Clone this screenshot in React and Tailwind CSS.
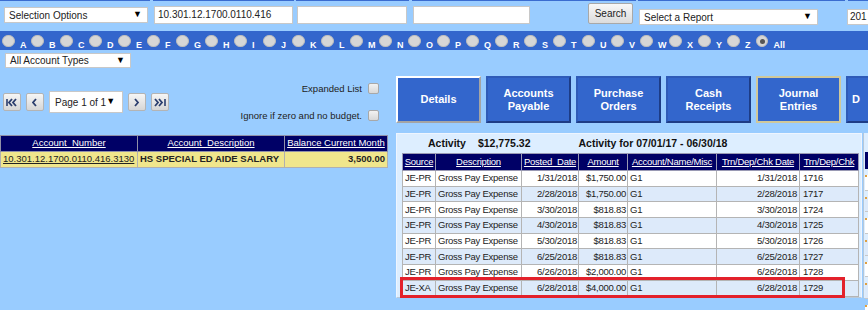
import React from "react";

const letters = "ABCDEFGHIJKLMNOPQRSTUVWXYZ".split("");

const rows = [
  ["JE-PR", "Gross Pay Expense", "1/31/2018", "$1,750.00", "G1", "1/31/2018", "1716"],
  ["JE-PR", "Gross Pay Expense", "2/28/2018", "$1,750.00", "G1", "2/28/2018", "1717"],
  ["JE-PR", "Gross Pay Expense", "3/30/2018", "$818.83", "G1", "3/30/2018", "1724"],
  ["JE-PR", "Gross Pay Expense", "4/30/2018", "$818.83", "G1", "4/30/2018", "1725"],
  ["JE-PR", "Gross Pay Expense", "5/30/2018", "$818.83", "G1", "5/30/2018", "1726"],
  ["JE-PR", "Gross Pay Expense", "6/25/2018", "$818.83", "G1", "6/25/2018", "1727"],
  ["JE-PR", "Gross Pay Expense", "6/26/2018", "$2,000.00", "G1", "6/26/2018", "1728"],
  ["JE-XA", "Gross Pay Expense", "6/28/2018", "$4,000.00", "G1", "6/28/2018", "1729"],
];

const tabs = [
  ["Details"],
  ["Accounts", "Payable"],
  ["Purchase", "Orders"],
  ["Cash", "Receipts"],
  ["Journal", "Entries"],
];

function Select({ label, className }) {
  return (
    <div className={`shrink-0 flex items-center justify-between bg-white border border-[#c8c8c8] pl-[4px] pr-[5px] text-[10px] text-[#222] whitespace-nowrap ${className}`}>
      <span>{label}</span>
      <span className="text-[9px] text-black">▼</span>
    </div>
  );
}

function PagerBtn({ children }) {
  return (
    <div className="flex items-center justify-center w-[18px] h-[18px] border border-[#b4b4b4] rounded-[2px] bg-gradient-to-b from-[#f6f6f6] to-[#d6d6d6]">
      {children}
    </div>
  );
}

function Chevron({ dir = "left", x = 0 }) {
  const d = dir === "left" ? `M${x + 4} 1 L${x + 1} 4.5 L${x + 4} 8` : `M${x + 1} 1 L${x + 4} 4.5 L${x + 1} 8`;
  return <path d={d} fill="none" stroke="#2b3e6e" strokeWidth="1.8" />;
}

function Check() {
  return <div className="w-[11px] h-[11px] rounded-[2px] border border-[#a8a8a8] bg-gradient-to-b from-[#f2f2f2] to-[#d8d8d8]" />;
}

export default function App() {
  return (
    <div className="relative w-[868px] h-[310px] overflow-hidden bg-[#99ccff] font-['Liberation_Sans',Arial,sans-serif] text-[9.5px] text-[#222]">
      {/* frame dividers */}
      <div className="flex h-[1px]">
        <div className="w-[150px] bg-[#3a6cd0]" />
        <div className="w-[3px]" />
        <div className="w-[141px] bg-[#3a6cd0]" />
        <div className="w-[2px]" />
        <div className="w-[113px] bg-[#3a6cd0]" />
        <div className="w-[3px]" />
        <div className="w-[224px] bg-[#3a6cd0]" />
        <div className="w-[2px]" />
        <div className="w-[207px] bg-[#3a6cd0]" />
        <div className="w-[3px]" />
        <div className="flex-1 bg-[#3a6cd0]" />
      </div>

      {/* search row */}
      <div className="flex items-start h-[30px]">
        <Select label="Selection Options" className="ml-[4px] mt-[6px] w-[144px] h-[16px]" />
        <div className="shrink-0 ml-[6px] mt-[5px] w-[139px] h-[18px] bg-white border border-[#c8c8c8] pl-[3px] text-[10px] leading-[16px]">
          10.301.12.1700.0110.416
        </div>
        <div className="shrink-0 ml-[4px] mt-[5px] w-[110px] h-[18px] bg-white border border-[#c8c8c8]" />
        <div className="shrink-0 ml-[6px] mt-[5px] w-[117px] h-[18px] bg-white border border-[#c8c8c8]" />
        <div className="shrink-0 ml-[58px] mt-[2px] w-[45px] h-[21px] flex items-center justify-center border border-[#a8a8a8] rounded-[2px] bg-gradient-to-b from-[#f8f8f8] to-[#dcdcdc] text-[10px]">
          Search
        </div>
        <Select label="Select a Report" className="ml-[6px] mt-[8px] w-[179px] h-[16px]" />
        <div className="shrink-0 ml-[29px] mt-[8px] w-[40px] h-[16px] bg-white border border-[#c8c8c8] pl-[2px] text-[10px] leading-[14px]">
          201
        </div>
      </div>

      {/* alphabet band */}
      <div className="flex h-[19px] bg-[#3366cc] pl-[2px]">
        {letters.concat(["All"]).map((l) => (
          <div key={l} className="flex w-[29px] shrink-0 items-start pt-[4px]">
            <div className="flex items-center justify-center w-[13px] h-[12px] rounded-full bg-[#d6d6d6] border border-[#bdbdbd]">
              {l === "All" && <div className="w-[5px] h-[5px] rounded-full bg-[#555]" />}
            </div>
            <span className="ml-[5px] mt-[5px] text-[9px] font-bold text-white leading-[10px]">{l}</span>
          </div>
        ))}
      </div>

      <div className="flex">
        {/* left column */}
        <div className="w-[396px] shrink-0 flex flex-col">
          <Select label="All Account Types" className="ml-[5px] mt-[3px] w-[126px] h-[15px]" />
          <div className="mt-[14px] flex h-[41px]">
            <div className="flex items-center gap-[5px] ml-[3px] mt-[9px] h-[22px]">
              <PagerBtn>
                <svg width="13" height="9" viewBox="0 0 13 9">
                  <path d="M1 1 V8" stroke="#2b3e6e" strokeWidth="1.6" />
                  <Chevron dir="left" x={2} />
                  <Chevron dir="left" x={6} />
                </svg>
              </PagerBtn>
              <PagerBtn>
                <svg width="6" height="9" viewBox="0 0 6 9">
                  <Chevron dir="left" x={0} />
                </svg>
              </PagerBtn>
              <Select label="Page 1 of 1" className="w-[74px] h-[22px] !pl-[5px] !pr-[10px]" />
              <PagerBtn>
                <svg width="6" height="9" viewBox="0 0 6 9">
                  <Chevron dir="right" x={0} />
                </svg>
              </PagerBtn>
              <PagerBtn>
                <svg width="13" height="9" viewBox="0 0 13 9">
                  <Chevron dir="right" x={0} />
                  <Chevron dir="right" x={4} />
                  <path d="M11 1 V8" stroke="#2b3e6e" strokeWidth="1.6" />
                </svg>
              </PagerBtn>
            </div>
            <div className="ml-auto mr-[17px] flex flex-col items-end">
              <div className="flex items-end gap-[6px] h-[12px]">
                <span className="leading-[10px]">Expanded List</span>
                <Check />
              </div>
              <div className="mt-[15px] flex items-end gap-[6px] h-[12px]">
                <span className="leading-[10px]">Ignore if zero and no budget.</span>
                <Check />
              </div>
            </div>
          </div>

          <table className="mt-[12px] w-[387px] table-fixed border-collapse border border-[#a0a0a0]">
            <colgroup>
              <col className="w-[137px]" />
              <col className="w-[147px]" />
              <col className="w-[103px]" />
            </colgroup>
            <thead>
              <tr className="h-[16px] bg-[#000066] text-white">
                <th className="border border-[#9090a8] font-normal underline">Account_Number</th>
                <th className="border border-[#9090a8] font-normal underline">Account_Description</th>
                <th className="border border-[#9090a8] font-normal underline whitespace-nowrap">Balance Current Month</th>
              </tr>
            </thead>
            <tbody>
              <tr className="h-[16px] bg-[#f0e68c]">
                <td className="border border-[#b0b0b0] px-[2px] underline whitespace-nowrap">10.301.12.1700.0110.416.3130</td>
                <td className="border border-[#b0b0b0] px-[2px] font-bold whitespace-nowrap">HS SPECIAL ED AIDE SALARY</td>
                <td className="border border-[#b0b0b0] px-[2px] font-bold text-right">3,500.00</td>
              </tr>
            </tbody>
          </table>
        </div>

        {/* right column */}
        <div className="flex flex-col">
          <div className="mt-[26px] flex gap-[5px]">
            {tabs.map((t, i) => (
              <div
                key={i}
                className={`shrink-0 flex flex-col items-center justify-center w-[85px] h-[47px] bg-[#3366cc] text-white font-bold text-[11px] leading-[12.5px] border-2 ${
                  i === 0
                    ? "border-t-white border-l-white border-r-[#a4a4a4] border-b-[#a4a4a4]"
                    : i === 4
                    ? "border-[#d0c89a]"
                    : "border-t-[#2f5bb8] border-l-[#2f5bb8] border-r-[#1d3c86] border-b-[#1d3c86]"
                }`}
              >
                {t.map((line, j) => (
                  <span key={j}>{line}</span>
                ))}
              </div>
            ))}
            {/* next tab, cut off at the window edge */}
            <div className="shrink-0 flex items-center w-[22px] h-[47px] bg-[#3366cc] text-white font-bold text-[11px] border-2 border-r-0 border-t-[#2f5bb8] border-l-[#2f5bb8] border-b-[#1d3c86] pl-[4px] overflow-hidden">
              D
            </div>
          </div>

          <div className="mt-[10px] flex">
            <div className="w-[466px] shrink-0 h-[165px] bg-[#ddeeff] border border-[#eef5ff] border-b-[#b8c8d8] pl-[5px]">
              <div className="flex h-[19px] items-center font-bold text-[10.5px] text-[#111]">
                <span className="ml-[26px]">Activity</span>
                <span className="ml-[12px]">$12,775.32</span>
                <span className="ml-[48px]">Activity for 07/01/17 - 06/30/18</span>
              </div>
              <table className="w-[456px] table-fixed border-collapse bg-white tracking-[-0.25px]">
                <colgroup>
                  <col className="w-[33px]" />
                  <col className="w-[86px]" />
                  <col className="w-[57px]" />
                  <col className="w-[49px]" />
                  <col className="w-[89px]" />
                  <col className="w-[83px]" />
                  <col className="w-[59px]" />
                </colgroup>
                <thead>
                  <tr className="h-[17px] bg-[#000066] text-white">
                    {["Source", "Description", "Posted_Date", "Amount", "Account/Name/Misc", "Trn/Dep/Chk Date", "Trn/Dep/Chk"].map((h) => (
                      <th key={h} className="border border-[#9a9ab4] font-normal underline whitespace-nowrap overflow-hidden">
                        {h}
                      </th>
                    ))}
                  </tr>
                </thead>
                <tbody>
                  {rows.map((r, i) => (
                    <tr key={i} className={`h-[15.7px] ${i % 2 ? "bg-[#ddeafa]" : "bg-white"}`}>
                      <td className="border border-[#b4b4b4] pl-[2px] whitespace-nowrap">{r[0]}</td>
                      <td className="border border-[#b4b4b4] pl-[2px] whitespace-nowrap">{r[1]}</td>
                      <td className="border border-[#b4b4b4] pr-[1px] text-right">{r[2]}</td>
                      <td className="border border-[#b4b4b4] pr-[1px] text-right">{r[3]}</td>
                      <td className="border border-[#b4b4b4] pl-[2px]">{r[4]}</td>
                      <td className="border border-[#b4b4b4] pr-[2px] text-right">{r[5]}</td>
                      <td className="border border-[#b4b4b4] pl-[3px]">{r[6]}</td>
                    </tr>
                  ))}
                </tbody>
              </table>
            </div>
            {/* next panel, cut off at the window edge */}
            <div className="ml-[1px] w-[10px] shrink-0 h-[165px] bg-[#ddeeff] border-l border-[#b8c8d8] pl-[1px] pt-[19px]">
              <div className="h-[17px] bg-[#000066]" />
              {rows.map((_, i) => (
                <div key={i} className={`h-[15.7px] border-b border-[#c8c8c8] ${i % 2 ? "bg-[#ddeafa]" : "bg-white"}`}>
                  <div className="mt-[6px] w-[2px] h-[2px] bg-[#e0a040]" />
                </div>
              ))}
            </div>
          </div>
        </div>
      </div>

      {/* red highlight annotation */}
      <div className="absolute left-[400px] top-[277px] w-[445px] h-[21px] border-[3px] border-[#e3212b]" />
    </div>
  );
}
